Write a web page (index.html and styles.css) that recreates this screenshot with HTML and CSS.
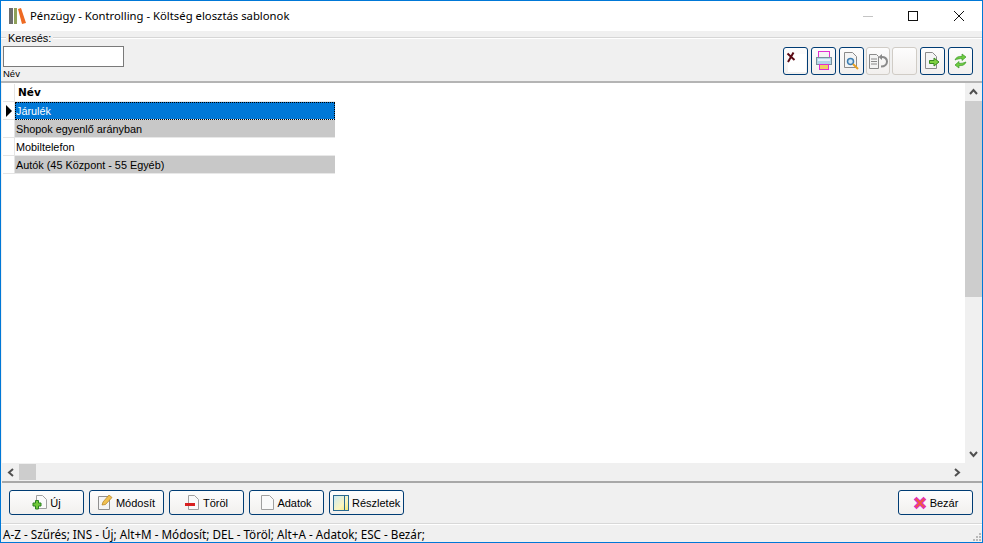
FILE: index.html
```html
<!DOCTYPE html>
<html lang="hu">
<head>
<meta charset="utf-8">
<title>Költség elosztás sablonok</title>
<link rel="stylesheet" href="styles.css">
</head>
<body>
<div class="window">
  <header class="titlebar">
    <svg class="app-icon" width="17" height="16" viewBox="0 0 17 16"><rect x="0" y="0" width="4" height="16" fill="#6d6d6d"/><rect x="5" y="0" width="3" height="16" fill="#8fa15a"/><path d="M9 1l3-1 5 15-4 1z" fill="#ee6a22"/></svg>
    <span class="title">Pénzügy - Kontrolling - Költség elosztás sablonok</span>
    <div class="winctl">
      <svg width="10" height="10" viewBox="0 0 10 10"><path d="M0 5.500h10" stroke="#c4c4c4"/></svg>
      <svg width="10" height="10" viewBox="0 0 10 10"><rect x=".5" y=".5" width="9" height="9" fill="none" stroke="#111"/></svg>
      <svg class="winclose" width="10" height="10" viewBox="0 0 10 10"><path d="M0 0l10 10M10 0L0 10" stroke="#111"/></svg>
    </div>
  </header>
  <section class="search">
    <div class="search-left">
      <span class="legend">Keresés:</span>
      <input class="search-input" type="text" aria-label="Keresés">
      <span class="hint">Név</span>
    </div>
    <div class="tools">
      <button class="tool"><svg width="22" height="24" viewBox="0 0 22 24"><rect x="3" y="5" width="18" height="18" fill="#fff"/><path d="M2.500 4.500l7 6.500M8.500 3.500L3 13" stroke="#5a0a14" stroke-width="2"/></svg></button>
      <button class="tool"><svg width="16" height="20" viewBox="0 0 16 20"><rect x="2.500" y=".5" width="11" height="6" fill="#f4f4f4" stroke="#e030d0"/><rect x=".5" y="6.500" width="15" height="7" fill="#b4d4e8" stroke="#78909c"/><rect x="2" y="8" width="12" height="2" fill="#e4f2fa"/><rect x="3.500" y="13.500" width="9" height="5" fill="#f2d060" stroke="#e030d0"/></svg></button>
      <button class="tool"><svg width="15" height="18" viewBox="0 0 15 18"><path d="M.5.500h8l4 4v11H.5z" fill="#f4f4f4" stroke="#8a8a8a"/><circle cx="6.500" cy="9.500" r="3" fill="#d4e8f6" stroke="#3c7cb0" stroke-width="1.500"/><path d="M9 12l5 5" stroke="#e8a020" stroke-width="2"/></svg></button>
      <button class="tool off narrow"><svg width="19" height="15" viewBox="0 0 19 15"><path d="M.5.500h7l2 2v12H.5z" fill="#f4f4f4" stroke="#8a8a8a"/><path d="M2 5h6M2 7.500h6M2 10h6" stroke="#8a8a8a"/><path d="M12 3c4-.5 6 2 6 4.500s-2 5-6 5" fill="none" stroke="#8a8a8a" stroke-width="2"/><path d="M13 0v6L9.500 3z" fill="#8a8a8a"/></svg></button>
      <button class="tool off"></button>
      <button class="tool"><svg width="15" height="18" viewBox="0 0 15 18"><path d="M.5.500h7l4 4v12H.5z" fill="#f4f4f4" stroke="#8a8a8a"/><path d="M4.500 8.500H9V6l5 4-5 4v-2.500H4.500z" fill="#7ed040" stroke="#3a8a20"/></svg></button>
      <button class="tool"><svg width="13" height="16" viewBox="0 0 13 16"><path d="M1 7c1-3 4-4 7-3.500V1l4 3-4 3.500V5.500C6 5.500 3 6 1 7z" fill="#70cc40" stroke="#3a9a28" stroke-width=".7"/><path d="M12 9c-1 3-4 4-7 3.500V15l-4-3 4-3.500v2c2 0 5-.5 7-1.500z" fill="#70cc40" stroke="#3a9a28" stroke-width=".7"/></svg></button>
    </div>
  </section>
  <section class="gridwrap">
    <div class="gridmain">
      <div class="grid">
        <div class="ind"></div><div class="cell head">Név</div>
        <div class="ind"><svg width="6" height="12" viewBox="0 0 6 12"><path d="M0 0l6 6-6 6z" fill="#000"/></svg></div><div class="cell sel">Járulék</div>
        <div class="ind"></div><div class="cell alt">Shopok egyenlő arányban</div>
        <div class="ind"></div><div class="cell">Mobiltelefon</div>
        <div class="ind"></div><div class="cell alt">Autók (45 Központ - 55 Egyéb)</div>
      </div>
      <div class="vscroll">
        <svg class="arrow" width="9" height="18" viewBox="0 0 9 18"><path d="M1 11l3.500-4L8 11" fill="none" stroke="#505050" stroke-width="2"/></svg>
        <div class="vthumb"></div>
        <svg class="arrow bottom" width="9" height="18" viewBox="0 0 9 18"><path d="M1 7l3.500 4L8 7" fill="none" stroke="#505050" stroke-width="2"/></svg>
      </div>
    </div>
    <div class="hscroll">
      <svg class="arrow" width="17" height="17" viewBox="0 0 17 17"><path d="M11 5L7 8.500l4 3.500" fill="none" stroke="#505050" stroke-width="2"/></svg>
      <div class="hthumb"></div>
      <svg class="arrow end" width="17" height="17" viewBox="0 0 17 17"><path d="M7 5l4 3.500L7 12" fill="none" stroke="#505050" stroke-width="2"/></svg>
    </div>
  </section>
  <footer class="actions">
    <button class="btn"><svg width="15" height="15" viewBox="0 0 15 15"><path d="M4.500.500h6l4 4v9h-10z" fill="#fafafa" stroke="#a0a0a0"/><path d="M3.500 5.500h3v2.500H9v3H6.500v3h-3v-3H1v-3h2.500z" fill="#70c838" stroke="#2a8020"/></svg>Új</button>
    <button class="btn"><svg width="15" height="15" viewBox="0 0 15 15"><path d="M.5 1.500h11v13H.5z" fill="#f4f4f4" stroke="#909090"/><path d="M4 10l1-3 6-7 3 2.500-6.500 7z" fill="#f0c050" stroke="#b08020" stroke-width=".7"/></svg>Módosít</button>
    <button class="btn"><svg width="15" height="15" viewBox="0 0 15 15"><path d="M3.500.500h6l4 4v10h-10z" fill="#fafafa" stroke="#a0a0a0"/><rect x="0" y="8" width="10" height="3" fill="#d82020"/></svg>Töröl</button>
    <button class="btn"><svg width="13" height="15" viewBox="0 0 13 15"><path d="M.5.500h8l4 4v10H.5z" fill="#fafafa" stroke="#a0a0a0"/></svg>Adatok</button>
    <button class="btn details"><svg width="16" height="16" viewBox="0 0 16 16"><defs><linearGradient id="g" x1="0" y1="0" x2="1" y2="1"><stop offset="0" stop-color="#c8e8f8"/><stop offset=".6" stop-color="#fbf6c0"/><stop offset="1" stop-color="#f4ea70"/></linearGradient></defs><rect x=".5" y=".5" width="15" height="15" fill="url(#g)" stroke="#2a6a90"/><path d="M11.500 1v14" stroke="#2a6a90"/></svg>Részletek</button>
    <button class="btn close"><svg width="14" height="14" viewBox="0 0 14 14"><path d="M1.500 3.500l2-2L7 5l3.500-3.500 2 2L9 7l3.500 3.500-2 2L7 9l-3.500 3.500-2-2L5 7z" fill="#f06030" stroke="#e030c0" stroke-width="1.200"/></svg>Bezár</button>
  </footer>
  <div class="status">
    <span>A-Z - Szűrés; INS - Új; Alt+M - Módosít; DEL - Töröl; Alt+A - Adatok; ESC - Bezár;</span>
    <svg class="grip" width="8" height="8" viewBox="0 0 8 8"><path d="M6 0h2v2H6zM3 3h2v2H3zM6 3h2v2H6zM0 6h2v2H0zM3 6h2v2H3zM6 6h2v2H6z" fill="#b8b8b8"/></svg>
  </div>
</div>
</body>
</html>
```

FILE: styles.css
```css
* { box-sizing: border-box; }
html, body { margin: 0; padding: 0; }
body { width: 983px; height: 543px; overflow: hidden; background: #fff; font-family: "Liberation Sans", sans-serif; font-size: 11px; color: #000; }
button { font: inherit; color: inherit; margin: 0; }
.window { width: 983px; height: 543px; border: 1px solid #0078d7; display: flex; flex-direction: column; background: #f0f0f0; }
.titlebar { height: 30px; flex: none; background: #fff; display: flex; align-items: center; padding-left: 8px; }
.app-icon { flex: none; margin-right: 4px; }
.title { font-family: "Noto Sans", sans-serif; font-size: 11.3px; line-height: 30px; }
.winctl { margin-left: auto; display: flex; gap: 35px; padding-right: 18px; }
.winclose { margin-left: 1px; }
.search { height: 52px; flex: none; display: flex; justify-content: space-between; background: #f0f0f0; border-bottom: 2px solid #b4b4b4; padding: 0 9px 0 2px; position: relative; }
.search::before { content: ""; position: absolute; left: 0; right: 0; top: 6px; border-top: 1px solid #d6d6d6; border-bottom: 1px solid #fff; }
.search-left { display: flex; flex-direction: column; align-items: flex-start; position: relative; }
.legend { margin-left: 3px; padding: 0 2px; background: #f0f0f0; line-height: 14px; height: 15px; }
.search-input { width: 121px; height: 21px; border: 1px solid #7a7a7a; background: #fff; padding: 0; display: block; }
.hint { font-size: 9.5px; line-height: 12px; margin-top: 1px; }
.tools { display: flex; align-items: flex-start; padding-top: 16px; gap: 3px; position: relative; }
.tool { width: 25px; height: 28px; border: 1px solid #003c74; border-radius: 3px; background: linear-gradient(#fdfdfd, #f2f0ee); padding: 0; display: flex; align-items: center; justify-content: center; }
.tool.off { border-color: #d0ccc6; margin-left: -1px; }
.tool.narrow { width: 24px; }
.gridwrap { height: 400px; flex: none; background: #fff; margin-left: 1px; border-bottom: 2px solid #a8a8a8; display: flex; flex-direction: column; }
.gridmain { flex: 1; display: flex; min-height: 0; }
.grid { flex: 1; display: grid; grid-template-columns: 12px 320px; grid-auto-rows: 18px; align-content: start; margin-left: 1px; padding-top: 1px; }
.ind { border-right: 1px solid #e4e4e4; border-bottom: 1px solid #e4e4e4; display: flex; align-items: center; padding-left: 3px; }
.cell { padding: 1px 0 0 1px; font-size: 10.85px; line-height: 17px; white-space: nowrap; border-bottom: 1px solid #e8e8e8; }
.head { font-family: "DejaVu Sans", sans-serif; font-size: 10.5px; font-weight: 700; padding: 0 0 0 3px; }
.sel { background: #0078d7; color: #fff; outline: 1px dotted #000; outline-offset: -1px; }
.alt { background: #c8c8c8; }
.vscroll { width: 17px; background: #f0f0f0; flex: none; display: flex; flex-direction: column; align-items: center; }
.vthumb { width: 17px; height: 196px; background: #cdcdcd; }
.arrow { flex: none; }
.arrow.bottom { margin-top: auto; }
.hscroll { height: 18px; flex: none; background: #f0f0f0; display: flex; align-items: center; padding-right: 17px; }
.hthumb { width: 17px; height: 16px; background: #cdcdcd; }
.arrow.end { margin-left: auto; }
.actions { height: 41px; flex: none; display: flex; gap: 5px; align-items: flex-start; padding: 7px 9px 0 8px; background: #f0f0f0; border-bottom: 1px solid #d8d8d8; }
.btn { width: 75px; height: 25px; border: 1px solid #003c74; border-radius: 3px; background: linear-gradient(#fdfdfd, #f2f0ee); padding: 0; display: flex; align-items: center; justify-content: center; gap: 3px; white-space: nowrap; }
.btn svg { flex: none; }
.btn.details { justify-content: flex-start; padding-left: 3px; gap: 3px; }
.btn.close { margin-left: auto; gap: 3px; }
.status { flex: 1; display: flex; align-items: center; justify-content: space-between; padding: 0 1px 0 2px; white-space: nowrap; background: #f0f0f0; border-top: 1px solid #fff; font-family: "Noto Sans", sans-serif; font-size: 11.7px; }
.grip { align-self: flex-end; margin-bottom: 1px; }
```
